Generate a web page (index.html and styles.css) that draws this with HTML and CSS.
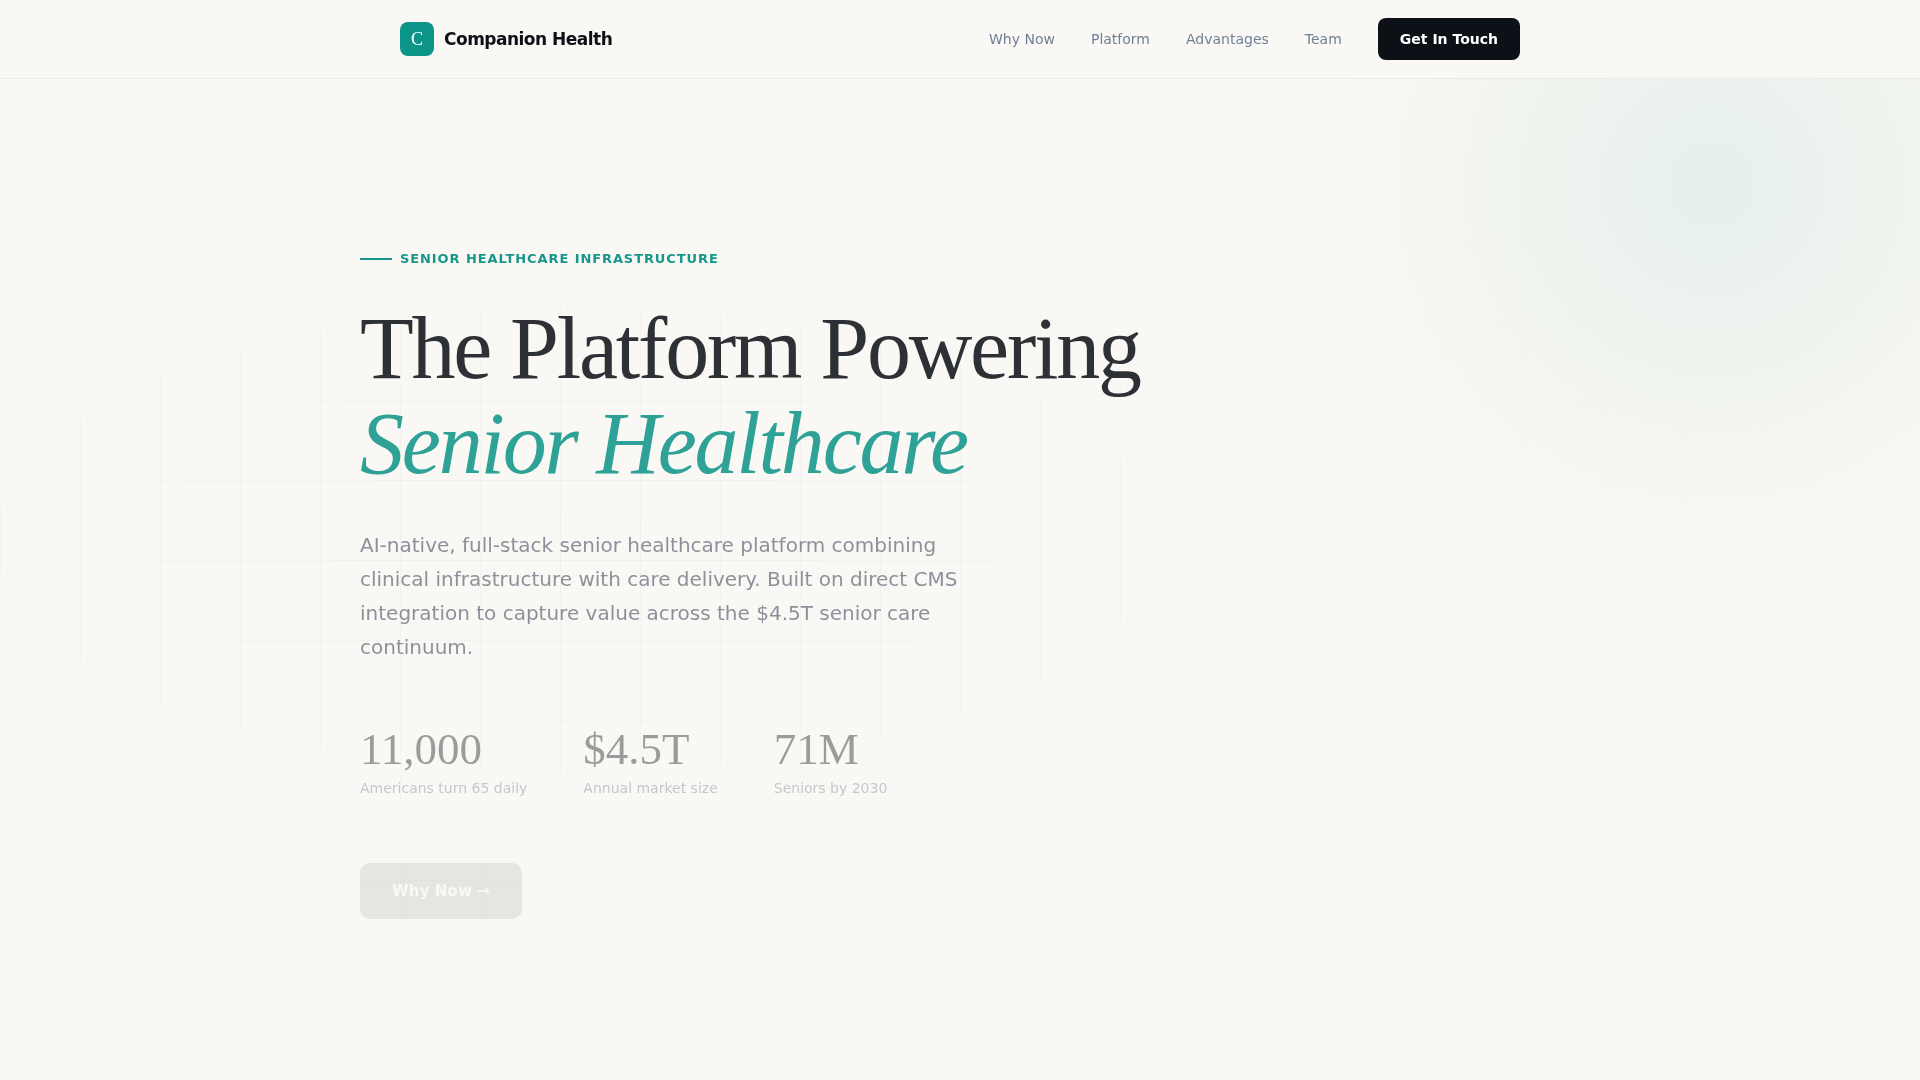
FILE: index.html
```html
<!DOCTYPE html>
<html lang="en">
<head>
  <meta charset="UTF-8">
  <meta name="viewport" content="width=device-width, initial-scale=1.0">
  <title>Companion Health</title>
  <link rel="stylesheet" href="styles.css">
</head>
<body>
  <nav class="nav">
    <div class="nav-inner">
      <a href="#" class="logo">
        <span class="logo-mark">C</span>
        <span class="logo-text">Companion Health</span>
      </a>
      <div class="nav-links">
        <a href="#why-now">Why Now</a>
        <a href="#platform">Platform</a>
        <a href="#advantages">Advantages</a>
        <a href="#team">Team</a>
        <a href="#contact" class="nav-cta">Get In Touch</a>
      </div>
    </div>
  </nav>

  <header class="hero">
    <div class="hero-glow"></div>
    <div class="hero-grid"></div>
    <div class="hero-content">
      <div class="hero-eyebrow">Senior Healthcare Infrastructure</div>
      <h1>The Platform Powering<br><em>Senior Healthcare</em></h1>
      <p class="hero-text">AI-native, full-stack senior healthcare platform combining clinical infrastructure with care delivery. Built on direct CMS integration to capture value across the $4.5T senior care continuum.</p>
      <div class="hero-stats">
        <div class="stat">
          <div class="stat-value">11,000</div>
          <div class="stat-label">Americans turn 65 daily</div>
        </div>
        <div class="stat">
          <div class="stat-value">$4.5T</div>
          <div class="stat-label">Annual market size</div>
        </div>
        <div class="stat">
          <div class="stat-value">71M</div>
          <div class="stat-label">Seniors by 2030</div>
        </div>
      </div>
      <a href="#why-now" class="hero-btn">Why Now →</a>
    </div>
  </header>
</body>
</html>
```

FILE: styles.css
```css
:root {
  --bg: #faf8f4;
  --ink: #0c1117;
  --teal: #0d9488;
  --slate: #718096;
  --gray: #6b7280;
  --serif: "Liberation Serif", serif;
  --sans: "DejaVu Sans", sans-serif;
}

* {
  margin: 0;
  padding: 0;
  box-sizing: border-box;
}

body {
  font-family: var(--sans);
  background: var(--bg);
  color: var(--ink);
  overflow-x: hidden;
}

a {
  text-decoration: none;
}

/* Nav */
.nav {
  position: fixed;
  top: 0;
  left: 0;
  right: 0;
  z-index: 100;
  padding: 18px 40px;
  background: rgba(250, 248, 244, 0.95);
  backdrop-filter: blur(20px);
  border-bottom: 1px solid rgba(12, 17, 23, 0.06);
}

.nav-inner {
  max-width: 1120px;
  margin: 0 auto;
  display: flex;
  justify-content: space-between;
  align-items: center;
}

.logo {
  display: flex;
  align-items: center;
  gap: 10px;
  color: var(--ink);
}

.logo-mark {
  width: 34px;
  height: 34px;
  display: flex;
  align-items: center;
  justify-content: center;
  background: var(--teal);
  border-radius: 8px;
  color: #fff;
  font-family: var(--serif);
  font-size: 18px;
}

.logo-text {
  font-size: 17px;
  font-weight: 600;
  letter-spacing: -0.03em;
}

.nav-links {
  display: flex;
  align-items: center;
  gap: 36px;
  font-size: 14px;
}

.nav-links a {
  color: var(--slate);
}

.nav-links .nav-cta {
  padding: 12px 22px;
  background: var(--ink);
  border-radius: 8px;
  color: #fff;
  font-weight: 600;
  line-height: 18px;
}

/* Hero */
.hero {
  position: relative;
  min-height: 100vh;
  padding: 248px 40px 160px;
  overflow: hidden;
}

.hero-glow {
  position: absolute;
  top: -20%;
  right: -10%;
  width: 800px;
  height: 800px;
  background: radial-gradient(circle, rgba(13, 148, 136, 0.12) 0%, transparent 70%);
  opacity: 0.7;
}

.hero-grid {
  position: absolute;
  inset: 0;
  background-image:
    linear-gradient(rgba(12, 17, 23, 0.03) 1px, transparent 1px),
    linear-gradient(90deg, rgba(12, 17, 23, 0.03) 1px, transparent 1px);
  background-size: 80px 80px;
  mask-image: radial-gradient(ellipse at 30% 50%, black 0%, transparent 70%);
}

.hero-content {
  position: relative;
  max-width: 1200px;
  margin: 0 auto;
}

.hero-eyebrow {
  display: flex;
  align-items: center;
  gap: 8px;
  margin-bottom: 31px;
  color: var(--teal);
  font-size: 13px;
  font-weight: 600;
  line-height: 22px;
  letter-spacing: 0.07em;
  text-transform: uppercase;
  opacity: 0.96;
}

.hero-eyebrow::before {
  content: "";
  width: 32px;
  height: 2px;
  background: var(--teal);
}

h1 {
  margin-bottom: 37px;
  font-family: var(--serif);
  font-size: 88px;
  font-weight: 400;
  line-height: 95px;
  letter-spacing: -0.025em;
  opacity: 0.86;
}

h1 em {
  color: var(--teal);
}

.hero-text {
  max-width: 620px;
  margin-bottom: 61px;
  color: var(--gray);
  font-size: 20px;
  line-height: 34px;
  opacity: 0.77;
}

.hero-stats {
  display: flex;
  gap: 56px;
  margin-bottom: 64px;
}

.stat {
  opacity: 0.4;
}

.stat-value {
  margin-bottom: 4px;
  font-family: var(--serif);
  font-size: 45px;
  line-height: 48px;
}

.stat-label {
  color: var(--slate);
  font-size: 14px;
  line-height: 22px;
}

.hero-btn {
  display: inline-block;
  padding: 17px 32px;
  background: var(--ink);
  border-radius: 10px;
  box-shadow: 0 4px 20px rgba(12, 17, 23, 0.15);
  color: #fff;
  font-size: 15px;
  font-weight: 600;
  line-height: 22px;
  letter-spacing: 0.01em;
  opacity: 0.08;
}
```
